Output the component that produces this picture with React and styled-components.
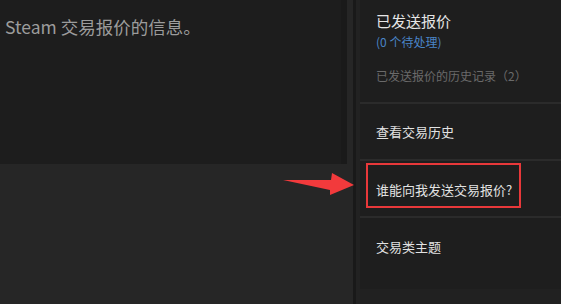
import styled, { createGlobalStyle } from "styled-components";

const Global = createGlobalStyle`
  html, body { margin: 0; padding: 0; background: #262626; }
  body { font-family: "Noto Sans CJK SC", "Noto Sans", Roboto, sans-serif; }
`;

const Page = styled.div`
  position: relative;
  width: 561px;
  height: 304px;
  display: flex;
  overflow: hidden;
  background: #262626;
`;

const LeftColumn = styled.div`
  width: 353px;
  flex-shrink: 0;
  display: flex;
  flex-direction: column;
`;

const InfoPanel = styled.div`
  height: 164px;
  width: 347px;
  background: #1d1d1d;
  border-right: 6px solid #1a1a1a;
  padding: 16px 0 0 5px;
  box-sizing: border-box;
`;

const InfoText = styled.div`
  color: #9c9c9c;
  font-size: 17.5px;
  line-height: 22px;
`;

const Sidebar = styled.div`
  flex: 1;
  background: #1e1e1e;
  border-left: 3px solid #191919;
  box-shadow: inset 4px 0 0 #222222;
  padding-left: 4px;
  display: flex;
  flex-direction: column;
`;

const Section = styled.div`
  padding: ${(p) => p.$pad || "0 0 0 16px"};
  height: ${(p) => p.$h}px;
  box-sizing: border-box;
  border-bottom: ${(p) => (p.$noline ? "none" : "2px solid #2b2b2b")};
  display: flex;
  flex-direction: column;
  justify-content: ${(p) => p.$justify || "center"};
  background: ${(p) => p.$bg || "transparent"};
`;

const Heading = styled.div`
  color: #e6e6e6;
  font-size: 15px;
  line-height: 20px;
`;

const Pending = styled.div`
  color: #4a85c8;
  font-size: 12px;
  line-height: 16px;
  margin-top: 3px;
`;

const History = styled.div`
  color: #6a6a6a;
  font-size: 12px;
  line-height: 16px;
  margin-top: 18px;
`;

const LinkItem = styled.div`
  color: #e2e2e2;
  font-size: 13px;
  line-height: 18px;
`;

const Highlight = styled.div`
  margin: 2px 0 0 6px;
  width: 155px;
  height: 45px;
  border: 2px solid #e8383a;
  box-sizing: border-box;
  display: flex;
  align-items: center;
  padding: 9px 0 0 8px;
`;

const Arrow = styled.svg`
  position: absolute;
  left: 282px;
  top: 172px;
`;

export default function App() {
  return (
    <>
      <Global />
      <Page>
        <LeftColumn>
          <InfoPanel>
            <InfoText>Steam 交易报价的信息。</InfoText>
          </InfoPanel>
        </LeftColumn>
        <Sidebar>
          <Section $h={104} $pad="11px 0 0 16px" $justify="flex-start">
            <Heading>已发送报价</Heading>
            <Pending>(0 个待处理)</Pending>
            <History>已发送报价的历史记录（2）</History>
          </Section>
          <Section $h={57}>
            <LinkItem>查看交易历史</LinkItem>
          </Section>
          <Section $h={57} $pad="0" $justify="flex-start">
            <Highlight>
              <LinkItem>谁能向我发送交易报价?</LinkItem>
            </Highlight>
          </Section>
          <Section $h={71} $noline $pad="20px 0 0 16px" $justify="flex-start">
            <LinkItem>交易类主题</LinkItem>
          </Section>
          <Section $h={15} $noline $bg="#212121" />
        </Sidebar>
        <Arrow width="74" height="26" viewBox="0 0 74 26">
          <polygon points="1,8 49,8 50,1 72,13 48,23 48,18" fill="#f23a3c" />
        </Arrow>
      </Page>
    </>
  );
}
